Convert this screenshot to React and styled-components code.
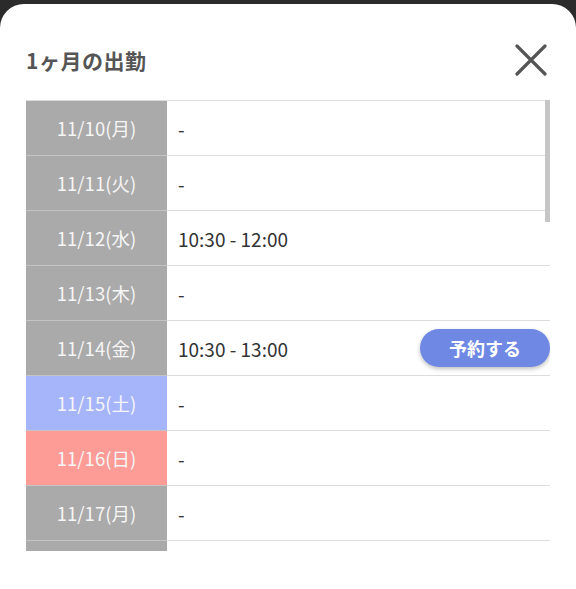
import React from 'react'
import styled, { createGlobalStyle } from 'styled-components'

const GlobalStyle = createGlobalStyle`
  html, body {
    margin: 0;
    padding: 0;
    background: #2b2b2b;
    font-family: "Noto Sans CJK JP", "Noto Sans", sans-serif;
  }
`

const WEEK = ['日', '月', '火', '水', '木', '金', '土']

const shifts = {
  '11/12': '10:30 - 12:00',
  '11/14': '10:30 - 13:00',
}

const bookable = ['11/14']

const buildDays = () => {
  const days = []
  const start = new Date(2025, 10, 10)
  for (let i = 0; i < 30; i++) {
    const d = new Date(start)
    d.setDate(start.getDate() + i)
    const key = `${d.getMonth() + 1}/${d.getDate()}`
    days.push({ key, dow: d.getDay(), label: `${key}(${WEEK[d.getDay()]})` })
  }
  return days
}

const Sheet = styled.div`
  margin-top: 4px;
  height: 585px;
  background: #fff;
  border-radius: 24px 24px 0 0;
  overflow: hidden;
`

const Header = styled.div`
  display: flex;
  align-items: center;
  justify-content: space-between;
  height: 96px;
  padding: 16px 28px 0 26px;
  box-sizing: border-box;
`

const Title = styled.h1`
  margin: 0;
  font-size: 21px;
  font-weight: 700;
  color: #555;
  letter-spacing: 0.5px;
`

const CloseButton = styled.button`
  border: 0;
  background: none;
  padding: 0;
  width: 34px;
  height: 34px;
  display: flex;
  align-items: center;
  justify-content: center;
`

const ScrollArea = styled.div`
  position: relative;
  margin: 0 26px;
  height: 451px;
  overflow: hidden;
`

const Thumb = styled.div`
  position: absolute;
  top: 0;
  right: 0;
  width: 5px;
  height: 122px;
  background: #c6c6c6;
`

const Table = styled.div`
  border-top: 1px solid #ddd;
`

const Row = styled.div`
  display: grid;
  grid-template-columns: 141px 1fr;
  height: 55px;
`

const DateCell = styled.div`
  display: flex;
  align-items: center;
  justify-content: center;
  background: ${p => (p.$dow === 6 ? '#a6b5fa' : p.$dow === 0 ? '#fd9c96' : '#aaaaaa')};
  color: #f6f6f6;
  font-size: 18.5px;
  border-bottom: 1px solid #c4c4c4;
`

const TimeCell = styled.div`
  display: flex;
  align-items: center;
  justify-content: space-between;
  padding-left: 11px;
  color: #333;
  font-size: 19px;
  border-bottom: 1px solid #ddd;
`

const Reserve = styled.button`
  width: 130px;
  height: 38px;
  border: 0;
  border-radius: 19px;
  background: #6e88e3;
  color: #fff;
  font-family: inherit;
  font-size: 18px;
  font-weight: 700;
  box-shadow: 0 2px 4px rgba(0, 0, 0, 0.25);
`

export default function App() {
  const days = buildDays()
  return (
    <>
      <GlobalStyle />
      <Sheet>
        <Header>
          <Title>1ヶ月の出勤</Title>
          <CloseButton aria-label="close">
            <svg width="32" height="32" viewBox="0 0 32 32">
              <path d="M2 2 L30 30 M30 2 L2 30" stroke="#555" strokeWidth="3.2" strokeLinecap="round" />
            </svg>
          </CloseButton>
        </Header>
        <ScrollArea>
          <Table>
            {days.map(day => (
              <Row key={day.key}>
                <DateCell $dow={day.dow}>{day.label}</DateCell>
                <TimeCell>
                  <span>{shifts[day.key] || '-'}</span>
                  {bookable.includes(day.key) && <Reserve>予約する</Reserve>}
                </TimeCell>
              </Row>
            ))}
          </Table>
          <Thumb />
        </ScrollArea>
      </Sheet>
    </>
  )
}
